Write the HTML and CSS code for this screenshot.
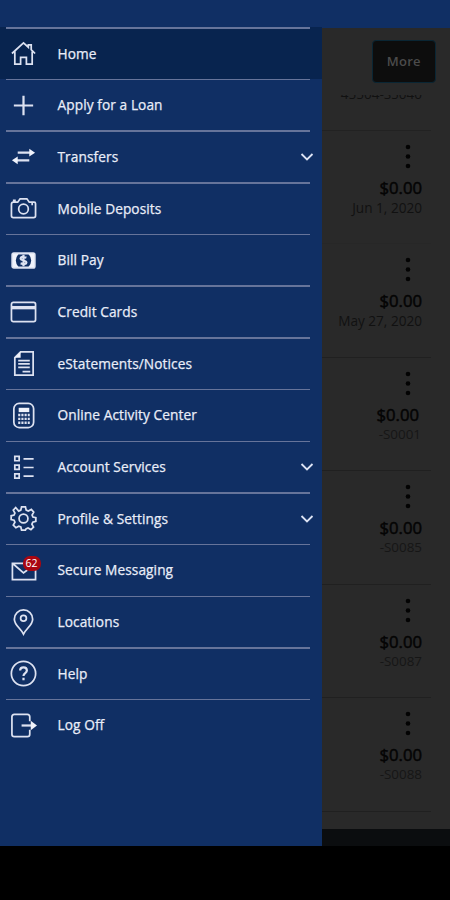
FILE: index.html
```html
<!DOCTYPE html>
<html lang="en">
<head>
<meta charset="utf-8">
<title>Accounts</title>
<link rel="stylesheet" href="styles.css">
</head>
<body>
<div class="screen">
  <header class="status"></header>
  <div class="body">
    <nav class="drawer">
      <ul class="menu">
        <li class="item active"><a class="row"><svg class="icon" viewBox="0 0 28 28"><path d="M2 14 14 3l5 4.500V5h3v5l4 4M5 12v13h6v-7h6v7h6V12"/></svg><span class="label">Home</span></a></li>
        <li class="item"><a class="row"><svg class="icon" viewBox="0 0 28 28"><path class="bold" d="M14 4v20M4 14h20"/></svg><span class="label">Apply for a Loan</span></a></li>
        <li class="item"><a class="row"><svg class="icon" viewBox="0 0 28 28"><path class="bold" d="M8 10h13M7 18h13"/><path class="solid" d="m20 6 6 4-6 4zM8 14l-6 4 6 4z"/></svg><span class="label">Transfers</span><svg class="chevron" viewBox="0 0 14 10"><path d="m1.500 2 5.500 5.500L12.500 2"/></svg></a></li>
        <li class="item"><a class="row"><svg class="icon" viewBox="0 0 28 28"><path d="M3.500 7.500H8L10.500 4h7L20 7.500h5q1.500 0 1.500 1.500v12.500q0 2-2 2h-21q-2 0-2-2v-12q0-2 2-2zM23 7.500v3M3 5.500h3"/><circle cx="14" cy="14.500" r="5"/></svg><span class="label">Mobile Deposits</span></a></li>
        <li class="item"><a class="row"><svg class="icon" viewBox="0 0 28 28"><rect class="bold" x="2.500" y="6.500" width="23" height="15" rx="1.500"/><path class="solid" d="M3 7h6q-6 7 0 14H3zM25 7h-6q6 7 0 14h6z"/><path class="bold" d="M17 11q-6-2-6 1c0 2 6 2 6 4q0 2.500-6 1M14 8v12"/></svg><span class="label">Bill Pay</span></a></li>
        <li class="item"><a class="row"><svg class="icon" viewBox="0 0 28 28"><rect x="1.500" y="4.500" width="25" height="20" rx="2"/><path class="thick" d="M2 10h24"/></svg><span class="label">Credit Cards</span></a></li>
        <li class="item"><a class="row"><svg class="icon" viewBox="0 0 28 28"><path d="M11 2h13v24H5V8z"/><path class="solid" d="M11 2v6H5z"/><path d="M8.500 11h12M8.500 14.500h12M8.500 18h12M13 22.500h8"/></svg><span class="label">eStatements/Notices</span></a></li>
        <li class="item"><a class="row"><svg class="icon" viewBox="0 0 28 28"><rect x="4" y="1.500" width="20.500" height="25" rx="5.500"/><path class="solid" d="M9 6h11v4.500H9z"/><path class="keys" d="M8.500 13.500h12M8.500 17.500h12M8.500 21.500h12"/></svg><span class="label">Online Activity Center</span></a></li>
        <li class="item"><a class="row"><svg class="icon" viewBox="0 0 28 28"><path d="M5 2.500h4.500V7H5zM5 11.500h4.500V16H5zM5 20.500h4.500V25H5zM14 5h10.500M14 14h10.500M14 23h10.500"/></svg><span class="label">Account Services</span><svg class="chevron" viewBox="0 0 14 10"><path d="m1.500 2 5.500 5.500L12.500 2"/></svg></a></li>
        <li class="item"><a class="row"><svg class="icon" viewBox="0 0 28 28"><path d="m12 2h4l.8 3.300 2.200 1 3.100-1.700 2.500 2.800-1.700 3 .9 2.100 3 .7v3.800l-3.200.8-.9 2.100 1.700 3-2.700 2.600-3-1.600-2.100.9L16 26h-4l-.8-3.200-2.100-.9-3 1.600-2.700-2.600 1.700-3-.9-2.100-3-.8v-3.800l3-.7.9-2.100-1.700-3 2.500-2.800L9 6.300l2.200-1z"/><circle cx="14" cy="14" r="4.600"/></svg><span class="label">Profile &amp; Settings</span><svg class="chevron" viewBox="0 0 14 10"><path d="m1.500 2 5.500 5.500L12.500 2"/></svg></a></li>
        <li class="item"><a class="row"><span class="mail"><svg class="icon" viewBox="0 0 28 28"><path d="M16 6.500H2.500v17h24V13M2.500 6.500 14 16.500l4-3"/></svg><span class="badge">62</span></span><span class="label">Secure Messaging</span></a></li>
        <li class="item"><a class="row"><svg class="icon" viewBox="0 0 28 28"><path d="M14 26C11 20 4.500 16.500 4.500 10.500a9.500 9.500 0 0 1 19 0C23.500 16.500 17 20 14 26z"/><circle cx="14" cy="9.500" r="3"/></svg><span class="label">Locations</span></a></li>
        <li class="item"><a class="row"><svg class="icon" viewBox="0 0 28 28"><circle cx="14" cy="14" r="12.600"/><path class="bold" d="M10.500 11c0-4.500 7-4.500 7 0 0 2.700-3.500 2.500-3.500 5.500M14 18.500v2.500"/></svg><span class="label">Help</span></a></li>
        <li class="item"><a class="row"><svg class="icon" viewBox="0 0 28 28"><path d="M20.500 9.500V5q0-2.500-2.500-2.500H4.500Q2 2.500 2 5v18q0 2.500 2.500 2.500H18q2.500 0 2.500-2.500v-4.500"/><path class="bold" d="M12 14h11"/><path class="solid" d="m21.500 9 6.500 5-6.500 5z"/></svg><span class="label">Log Off</span></a></li>
      </ul>
    </nav>
    <main class="page">
      <div class="toolbar"><button class="more">More</button></div>
      <div class="partial"><span>45504-S5040</span></div>
      <div class="accounts">
        <section class="account faint"><svg class="dots" viewBox="0 0 6 26"><circle cx="3" cy="3" r="2.300"/><circle cx="3" cy="12.500" r="2.300"/><circle cx="3" cy="22" r="2.300"/></svg><b class="amount">$0.00</b><span class="note">Jun 1, 2020</span></section>
        <section class="account"><svg class="dots" viewBox="0 0 6 26"><circle cx="3" cy="3" r="2.300"/><circle cx="3" cy="12.500" r="2.300"/><circle cx="3" cy="22" r="2.300"/></svg><b class="amount">$0.00</b><span class="note">May 27, 2020</span></section>
        <section class="account inset"><svg class="dots" viewBox="0 0 6 26"><circle cx="3" cy="3" r="2.300"/><circle cx="3" cy="12.500" r="2.300"/><circle cx="3" cy="22" r="2.300"/></svg><b class="amount">$0.00</b><span class="note code">-S0001</span></section>
        <section class="account"><svg class="dots" viewBox="0 0 6 26"><circle cx="3" cy="3" r="2.300"/><circle cx="3" cy="12.500" r="2.300"/><circle cx="3" cy="22" r="2.300"/></svg><b class="amount">$0.00</b><span class="note code">-S0085</span></section>
        <section class="account"><svg class="dots" viewBox="0 0 6 26"><circle cx="3" cy="3" r="2.300"/><circle cx="3" cy="12.500" r="2.300"/><circle cx="3" cy="22" r="2.300"/></svg><b class="amount">$0.00</b><span class="note code">-S0087</span></section>
        <section class="account"><svg class="dots" viewBox="0 0 6 26"><circle cx="3" cy="3" r="2.300"/><circle cx="3" cy="12.500" r="2.300"/><circle cx="3" cy="22" r="2.300"/></svg><b class="amount">$0.00</b><span class="note code">-S0088</span></section>
      </div>
      <div class="strip"></div>
    </main>
  </div>
</div>
</body>
</html>
```
FILE: styles.css
```css
* { box-sizing: border-box; }
body { margin: 0; background: #000; font-family: "Open Sans", "Noto Sans", sans-serif; }
.screen { width: 450px; height: 900px; display: flex; flex-direction: column; overflow: hidden; background: #000; }
.status { height: 27px; flex: none; background: #102f64; }
.body { height: 819px; display: grid; grid-template-columns: 321.5px 1fr; }

.drawer { background: #102f64; overflow: hidden; }
.menu { list-style: none; margin: 0; padding: 0; }
.item { height: 51.7px; }
.item::before { content: ""; display: block; width: 304px; height: 1.5px; margin-left: 6px; background: #66749a; }
.active { background: #08244f; }
.row { height: 50px; display: flex; align-items: center; padding: 0 8px 0 10px; color: #e9edf8; }
.icon { display: block; width: 27px; height: 27px; flex: none; fill: none; stroke: #dde2f1; stroke-width: 1.8; overflow: visible; }
.icon .bold { stroke-width: 2.3; }
.icon .thick { stroke-width: 3.5; }
.icon .solid { fill: #f0f3fc; stroke: none; }
.icon .keys { stroke-width: 2.4; stroke-dasharray: 2.2 1.1; }
.label { margin-left: 20.5px; font-size: 13.7px; line-height: 20px; letter-spacing: .08px; -webkit-text-stroke: .25px currentColor; white-space: nowrap; }
.chevron { width: 14px; height: 10px; margin-left: auto; fill: none; stroke: #dce3f4; stroke-width: 1.8; }
.mail { position: relative; display: block; flex: none; }
.badge { position: absolute; left: 12.5px; top: -1px; width: 18px; height: 15px; border-radius: 7px; background: #a90610; color: #fff; font-size: 10.5px; font-weight: 500; line-height: 15px; text-align: center; }

.page { display: flex; flex-direction: column; background: #292929; border-top: 1px solid #102f64; overflow: hidden; }
.toolbar { height: 67px; flex: none; display: flex; justify-content: flex-end; padding: 12px 14.5px 0 0; }
.more { width: 63.5px; height: 43px; padding: 0 0 2px; border: 1.5px solid #0a2634; border-radius: 4px; background: #0d0d0d; color: #4b4b4b; font: 600 13px "Open Sans", sans-serif; letter-spacing: .3px; }
.partial { height: 36px; flex: none; margin-right: 19px; padding-right: 9px; border-bottom: 1px solid #222; color: #111; font-size: 13.5px; line-height: 18px; text-align: right; overflow: hidden; }
.partial span { display: block; margin-top: -10px; }
.accounts { flex: none; margin-right: 19px; }
.account { height: 113.45px; display: flex; flex-direction: column; align-items: flex-end; padding: 13px 9px 0 0; border-bottom: 1px solid #202020; }
.faint { border-bottom-color: #272727; }
.inset { padding-right: 10px; }
.inset .dots { margin-right: 10px; }
.inset .amount { margin-right: 2px; }
.dots { display: block; width: 6px; height: 26px; margin-right: 11px; fill: #030303; }
.amount { margin-top: 7px; color: #040404; font-size: 16.7px; font-weight: 400; line-height: 22px; -webkit-text-stroke: .5px currentColor; }
.note { color: #111; font-size: 13.6px; line-height: 17px; }
.code { color: #161616; font-size: 13.4px; }
.strip { flex: 1; margin-top: 17px; background: #0b0d0f; }
```
